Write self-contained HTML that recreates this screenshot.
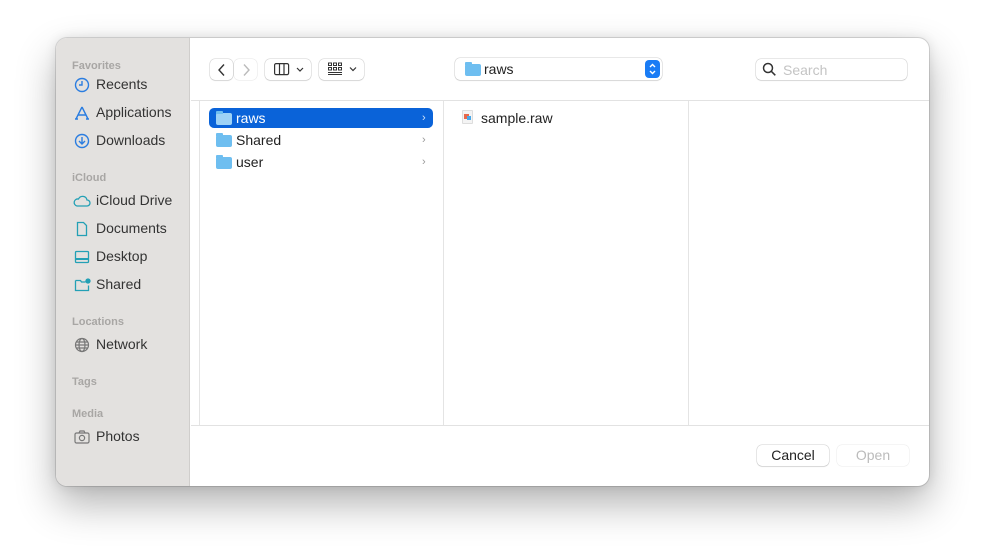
<!DOCTYPE html>
<html><head><style>
*{margin:0;padding:0;box-sizing:border-box}
body{width:985px;height:560px;background:#fff;font-family:"Liberation Sans",sans-serif;position:relative;overflow:hidden}
.win{position:absolute;left:56px;top:38px;width:873px;height:448px;border-radius:11px;background:#fff;box-shadow:0 18px 40px rgba(0,0,0,.30),0 0 12px rgba(0,0,0,.10),0 0 0 1px rgba(0,0,0,.12);overflow:hidden}
.side{position:absolute;left:0;top:0;width:134px;height:448px;background:#e3e1df;border-right:1px solid #d0cecc}
.a{position:absolute}
.lab{position:absolute;left:16px;font-size:11px;font-weight:bold;color:#a8a6a4}
.it{position:absolute;left:40px;font-size:14px;color:#333}
.ic{position:absolute;left:18px;width:16px;height:16px}
.btn{position:absolute;background:#fff;border-radius:5px;box-shadow:0 0 0 .5px rgba(0,0,0,.18),0 1px 1px rgba(0,0,0,.08)}
.vl{position:absolute;top:63px;width:1px;height:324px;background:#e4e4e4}
.row{position:absolute;font-size:14px;color:#222}
.chev{position:absolute;font-size:11px;color:#999}
.fold{position:absolute;width:16px;height:12px;background:#6ebef0;border-radius:2px}
.fold:before{content:"";position:absolute;left:0;top:-2px;width:7px;height:3px;background:#6ebef0;border-radius:1px 1px 0 0}
</style></head><body>
<div class="win">
<div class="side">
<div class="lab" style="top:22px">Favorites</div>
<svg class="ic" style="top:39px" viewBox="0 0 16 16" fill="none" stroke="#2b7de0" stroke-width="1.4"><circle cx="8" cy="8" r="6.5"/><path d="M8 4v4H5"/></svg>
<div class="it" style="top:38px">Recents</div>
<svg class="ic" style="top:67px" viewBox="0 0 16 16" fill="none" stroke="#2b7de0" stroke-width="1.4"><path d="M8 2L2 14M8 2l6 12M4 10h8M1 14h3M12 14h3"/></svg>
<div class="it" style="top:66px">Applications</div>
<svg class="ic" style="top:95px" viewBox="0 0 16 16" fill="none" stroke="#2b7de0" stroke-width="1.4"><circle cx="8" cy="8" r="6.5"/><path d="M8 4v7M5 8l3 3 3-3"/></svg>
<div class="it" style="top:94px">Downloads</div>
<div class="lab" style="top:134px">iCloud</div>
<svg class="ic" style="top:155px;width:18px;left:17px" viewBox="0 0 18 16" fill="none" stroke="#23a0b5" stroke-width="1.3"><path d="M4 13h10a3 3 0 0 0 0-6 4.5 4.5 0 0 0-8.5-1A3.5 3.5 0 0 0 4 13z"/></svg>
<div class="it" style="top:154px">iCloud Drive</div>
<svg class="ic" style="top:183px" viewBox="0 0 16 16" fill="none" stroke="#23a0b5" stroke-width="1.3"><path d="M3.5 1.5h6l3 3v10h-9z"/></svg>
<div class="it" style="top:182px">Documents</div>
<svg class="ic" style="top:211px" viewBox="0 0 16 16" fill="none" stroke="#23a0b5" stroke-width="1.3"><rect x="1.5" y="2.5" width="13" height="11" rx="1"/><path d="M1.5 10h13" stroke-width="2"/></svg>
<div class="it" style="top:210px">Desktop</div>
<svg class="ic" style="top:239px;width:18px" viewBox="0 0 18 16" fill="none" stroke="#23a0b5" stroke-width="1.3"><path d="M1.5 3.5h5l1 1.5h4M1.5 3.5v10h13v-5"/><circle cx="14" cy="4" r="2" fill="#23a0b5"/></svg>
<div class="it" style="top:238px">Shared</div>
<div class="lab" style="top:278px">Locations</div>
<svg class="ic" style="top:299px" viewBox="0 0 16 16" fill="none" stroke="#777" stroke-width="1.2"><circle cx="8" cy="8" r="6.5"/><ellipse cx="8" cy="8" rx="3" ry="6.5"/><path d="M1.5 8h13M2.5 5h11M2.5 11h11"/></svg>
<div class="it" style="top:298px">Network</div>
<div class="lab" style="top:338px">Tags</div>
<div class="lab" style="top:370px">Media</div>
<svg class="ic" style="top:391px" viewBox="0 0 16 16" fill="none" stroke="#777" stroke-width="1.2"><rect x="1" y="4" width="14" height="10" rx="1.5"/><path d="M5 4l1-2h4l1 2"/><circle cx="8" cy="9" r="2.6"/></svg>
<div class="it" style="top:390px">Photos</div>
</div>
<div class="a" style="left:135px;top:62px;width:738px;height:1px;background:#e2e2e2"></div>
<div class="btn" style="left:154px;top:21px;width:23px;height:21px"></div>
<svg class="a" style="left:160px;top:25px" width="12" height="14" viewBox="0 0 12 14" fill="none" stroke="#333" stroke-width="1.4"><path d="M8 1.5L3 7l5 5.5"/></svg>
<div class="btn" style="left:178px;top:21px;width:23px;height:21px;box-shadow:0 0 0 .5px rgba(0,0,0,.1)"></div>
<svg class="a" style="left:184px;top:25px" width="12" height="14" viewBox="0 0 12 14" fill="none" stroke="#bbb" stroke-width="1.4"><path d="M4 1.5L9 7l-5 5.5"/></svg>
<div class="btn" style="left:209px;top:21px;width:46px;height:21px"></div>
<svg class="a" style="left:218px;top:25px" width="36" height="13" viewBox="0 0 36 13" fill="none" stroke="#333" stroke-width="1.2"><rect x=".6" y=".6" width="14" height="11" rx="1.5"/><path d="M5.5 1v11M10 1v11M23 5l3 3 3-3"/></svg>
<div class="btn" style="left:263px;top:21px;width:45px;height:21px"></div>
<svg class="a" style="left:272px;top:24px" width="34" height="14" viewBox="0 0 34 14" fill="none" stroke="#333" stroke-width="1"><rect x=".5" y="1" width="3" height="2.5"/><rect x="5.5" y="1" width="3" height="2.5"/><rect x="10.5" y="1" width="3" height="2.5"/><rect x=".5" y="5.5" width="3" height="2.5"/><rect x="5.5" y="5.5" width="3" height="2.5"/><rect x="10.5" y="5.5" width="3" height="2.5"/><path d="M0 10.5h14M0 12.5h14"/><path d="M22 5.5l3 3 3-3" stroke-width="1.2"/></svg>
<div class="btn" style="left:399px;top:20px;width:207px;height:22px"></div>
<div class="fold" style="left:409px;top:26px"></div>
<div class="a" style="left:428px;top:23px;font-size:14px;color:#222">raws</div>
<div class="a" style="left:589px;top:22px;width:15px;height:18px;background:#1a7cf5;border-radius:4px"></div>
<svg class="a" style="left:591px;top:24px" width="11" height="14" viewBox="0 0 11 14" fill="none" stroke="#fff" stroke-width="1.4"><path d="M3 5l2.5-2.5L8 5M3 9l2.5 2.5L8 9"/></svg>
<div class="btn" style="left:700px;top:21px;width:151px;height:21px"></div>
<svg class="a" style="left:706px;top:24px" width="15" height="15" viewBox="0 0 15 15" fill="none" stroke="#333" stroke-width="1.5"><circle cx="6" cy="6" r="4.5"/><path d="M9.3 9.3l4 4"/></svg>
<div class="a" style="left:727px;top:24px;font-size:14px;color:#c4c4c4">Search</div>
<div class="vl" style="left:143px"></div>
<div class="vl" style="left:387px"></div>
<div class="vl" style="left:632px"></div>
<div class="a" style="left:153px;top:70px;width:224px;height:20px;background:#0a63d9;border-radius:5px"></div>
<div class="fold" style="left:160px;top:75px;background:#9dd2f6"></div>
<div class="row" style="left:180px;top:72px;color:#fff">raws</div>
<div class="chev" style="left:366px;top:74px;color:#d0e2f8">&#x203A;</div>
<div class="fold" style="left:160px;top:97px"></div>
<div class="row" style="left:180px;top:94px">Shared</div>
<div class="chev" style="left:366px;top:96px">&#x203A;</div>
<div class="fold" style="left:160px;top:119px"></div>
<div class="row" style="left:180px;top:116px">user</div>
<div class="chev" style="left:366px;top:118px">&#x203A;</div>
<div class="a" style="left:406px;top:72px;width:11px;height:14px;background:#f4f4f4;border:1px solid #ddd;border-radius:1px"></div>
<div class="a" style="left:408px;top:76px;width:5px;height:5px;background:#e8684a"></div>
<div class="a" style="left:411px;top:78px;width:4px;height:4px;background:#4aa8e8"></div>
<div class="row" style="left:425px;top:72px">sample.raw</div>
<div class="a" style="left:135px;top:387px;width:738px;height:1px;background:#e2e2e2"></div>
<div class="btn" style="left:701px;top:407px;width:72px;height:21px"></div>
<div class="a" style="left:701px;top:409px;width:72px;text-align:center;font-size:14px;color:#222">Cancel</div>
<div class="btn" style="left:781px;top:407px;width:72px;height:21px;box-shadow:0 0 0 .5px rgba(0,0,0,.08)"></div>
<div class="a" style="left:781px;top:409px;width:72px;text-align:center;font-size:14px;color:#bbb">Open</div>
</div>
</body></html>
